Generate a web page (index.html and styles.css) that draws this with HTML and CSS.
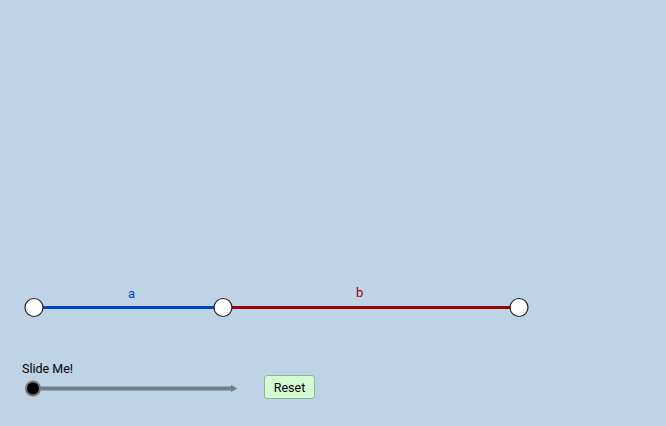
FILE: index.html
```html
<!DOCTYPE html>
<html>
<head>
<meta charset="utf-8">
<link rel="stylesheet" href="styles.css">
</head>
<body>
<div class="applet">
  <svg class="board" width="666" height="426" viewBox="0 0 666 426">
    <line x1="34" y1="307.5" x2="223" y2="307.5" stroke="#0044cc" stroke-width="3"/>
    <line x1="223" y1="307.5" x2="519" y2="307.5" stroke="#990000" stroke-width="3"/>
    <circle cx="34" cy="307.5" r="9" fill="#fff" stroke="#222" stroke-width="1.2"/>
    <circle cx="223" cy="307.5" r="9" fill="#fff" stroke="#222" stroke-width="1.2"/>
    <circle cx="519" cy="307.5" r="9" fill="#fff" stroke="#222" stroke-width="1.2"/>
    <text class="lbl lbl-a" x="128" y="298">a</text>
    <text class="lbl lbl-b" x="356" y="297">b</text>
    <text class="lbl lbl-s" x="22" y="373">Slide Me!</text>
    <line x1="33" y1="388.5" x2="232" y2="388.5" stroke="#737d87" stroke-width="4"/>
    <polygon points="231,385 237.5,388.5 231,392" fill="#737d87"/>
    <circle cx="33" cy="388.5" r="8" fill="#777"/>
    <circle cx="33" cy="388.5" r="6" fill="#000"/>
  </svg>
  <button class="reset">Reset</button>
</div>
</body>
</html>
```
FILE: styles.css
```css
html, body {
  margin: 0;
  padding: 0;
  background: #bed3e6;
}
.applet {
  position: relative;
  width: 666px;
  height: 426px;
  background: #bed3e6;
  overflow: hidden;
}
.board {
  display: block;
}
.lbl {
  font-family: Roboto, "Liberation Sans", sans-serif;
}
.lbl-a {
  fill: #0044cc;
  font-size: 13px;
}
.lbl-b {
  fill: #990000;
  font-size: 13px;
}
.lbl-s {
  fill: #000;
  font-size: 12.5px;
}
.reset {
  position: absolute;
  left: 264px;
  top: 375px;
  width: 51px;
  height: 24px;
  margin: 0;
  padding: 0;
  box-sizing: border-box;
  background: #d4fbd4;
  border: 1px solid #8fb496;
  border-radius: 3px;
  font-family: Roboto, "Liberation Sans", sans-serif;
  font-size: 12.5px;
  color: #000;
}
```
